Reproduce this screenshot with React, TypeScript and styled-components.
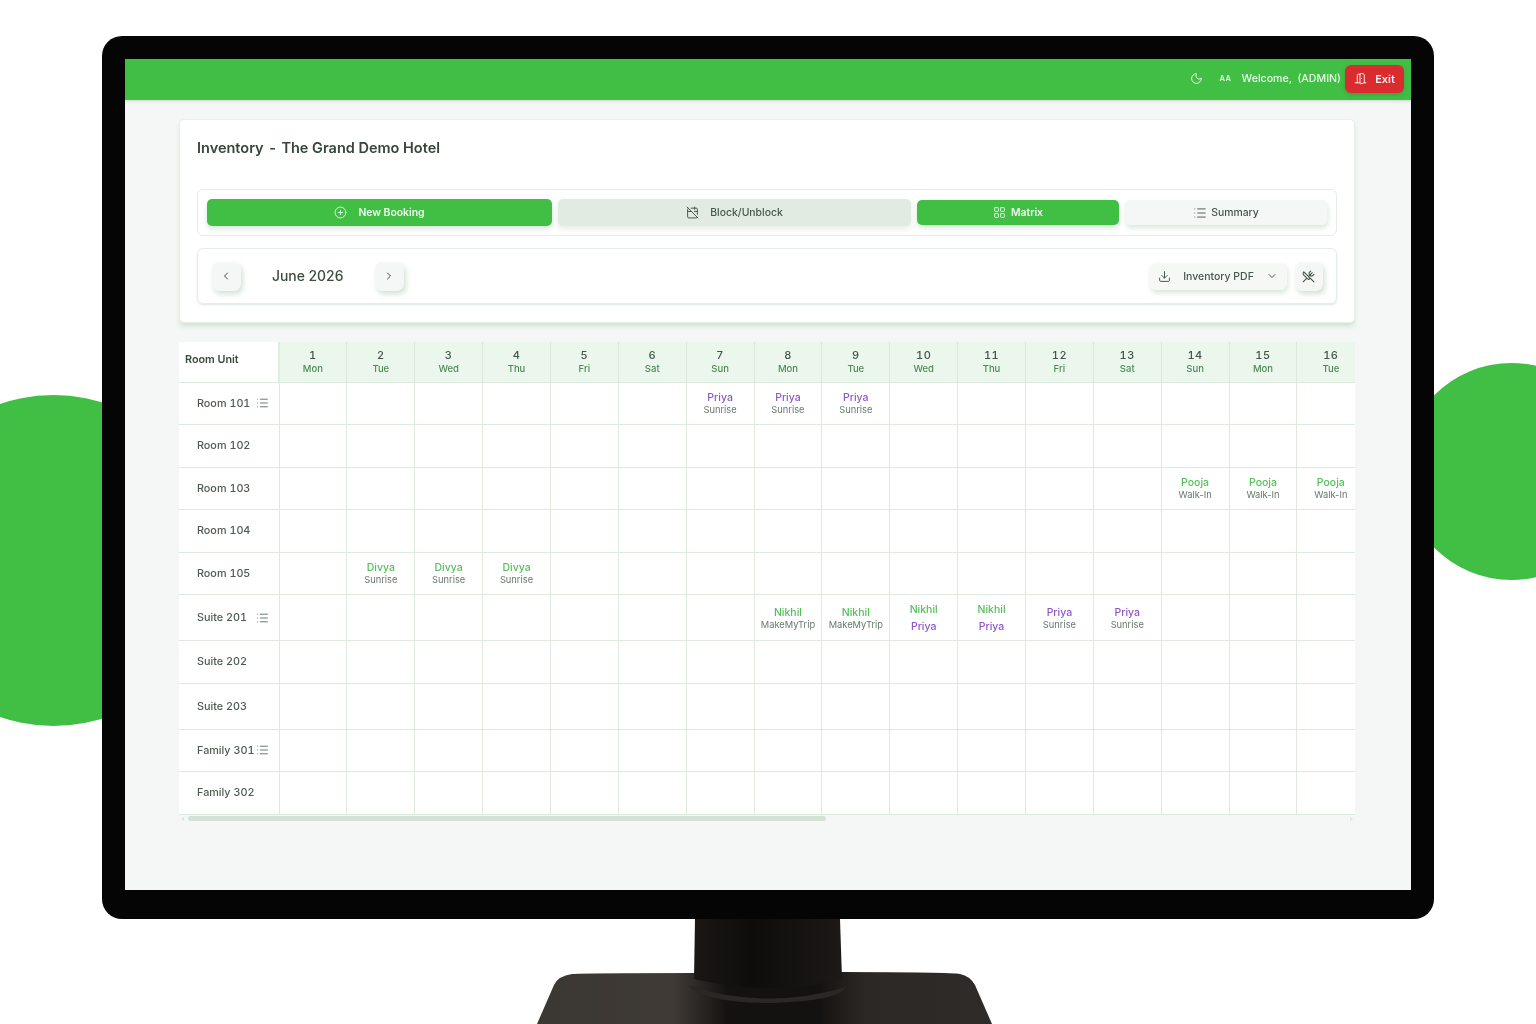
import React from 'react'
import styled, { createGlobalStyle } from 'styled-components'
import {
    CalendarOff,
    ChevronDown,
    ChevronLeft,
    ChevronRight,
    CirclePlus,
    DoorOpen,
    Download,
    LayoutGrid,
    List,
    Moon,
    UtensilsCrossed
} from 'lucide-react'

const GREEN = '#41bf45'
const GUEST_GREEN = '#55c05a'
const PURPLE = '#8c56c9'
const LINE = '#dceadf'

type Booking = { name: string; source?: string; second?: string; color: string }
type Room = { name: string; height: number; list?: boolean; bookings?: Record<number, Booking> }

const days = ['Mon', 'Tue', 'Wed', 'Thu', 'Fri', 'Sat', 'Sun', 'Mon', 'Tue', 'Wed', 'Thu', 'Fri', 'Sat', 'Sun', 'Mon', 'Tue']

const priya: Booking = { name: 'Priya', source: 'Sunrise', color: PURPLE }
const pooja: Booking = { name: 'Pooja', source: 'Walk-In', color: GUEST_GREEN }
const divya: Booking = { name: 'Divya', source: 'Sunrise', color: GUEST_GREEN }
const nikhil: Booking = { name: 'Nikhil', source: 'MakeMyTrip', color: GUEST_GREEN }
const split: Booking = { name: 'Nikhil', second: 'Priya', color: GUEST_GREEN }

const rooms: Room[] = [
    { name: 'Room 101', height: 42.5, list: true, bookings: { 7: priya, 8: priya, 9: priya } },
    { name: 'Room 102', height: 42.5 },
    { name: 'Room 103', height: 42.5, bookings: { 14: pooja, 15: pooja, 16: pooja } },
    { name: 'Room 104', height: 42.5 },
    { name: 'Room 105', height: 42.5, bookings: { 2: divya, 3: divya, 4: divya } },
    {
        name: 'Suite 201',
        height: 46,
        list: true,
        bookings: { 8: nikhil, 9: nikhil, 10: split, 11: split, 12: priya, 13: priya }
    },
    { name: 'Suite 202', height: 42.5 },
    { name: 'Suite 203', height: 46 },
    { name: 'Family 301', height: 42.5, list: true },
    { name: 'Family 302', height: 42.5 }
]

const BookingCell = ({ booking }: { booking: Booking }) => {
    if (booking.second) {
        return (
            <SplitStack>
                <GuestName $color={booking.color}>{booking.name}</GuestName>
                <GuestName $color={PURPLE}>{booking.second}</GuestName>
            </SplitStack>
        )
    }
    return (
        <>
            <GuestName $color={booking.color}>{booking.name}</GuestName>
            <GuestSource>{booking.source}</GuestSource>
        </>
    )
}

const Stand = () => (
    <StandSvg viewBox="0 0 560 105" width="560" height="105">
        <defs>
            <linearGradient id="base" x1="0" x2="1" y1="0" y2="0">
                <stop offset="0" stopColor="#3b3733" />
                <stop offset="0.3" stopColor="#3f3a36" />
                <stop offset="0.42" stopColor="#141210" />
                <stop offset="0.62" stopColor="#141210" />
                <stop offset="0.72" stopColor="#2c2825" />
                <stop offset="1" stopColor="#2f2b28" />
            </linearGradient>
            <linearGradient id="neck" x1="0" x2="1" y1="0" y2="0">
                <stop offset="0" stopColor="#1a1715" />
                <stop offset="0.4" stopColor="#0e0d0c" />
                <stop offset="1" stopColor="#1c1917" />
            </linearGradient>
        </defs>
        <path
            d="M57 105 L74 66 Q78 57 92 55 Q100 54 215 54 L360 53 Q470 53 480 55 Q490 57 495 66 L512 105 Z"
            fill="url(#base)"
        />
        <path d="M215 0 H360 L362 60 Q290 78 214 60 Z" fill="url(#neck)" />
        <path d="M207 66 Q285 92 366 68 Q360 82 290 84 Q225 84 207 66 Z" fill="#2a2724" />
    </StandSvg>
)

export default function App() {
    return (
        <>
            <GlobalStyle />
            <Stage>
                <CircleLeft />
                <CircleRight />
                <Monitor>
                    <Screen>
                        <TopBar>
                            <Moon size={13} strokeWidth={1.8} />
                            <FontToggle>AA</FontToggle>
                            <Welcome>Welcome, &nbsp;(ADMIN)</Welcome>
                            <ExitButton>
                                <DoorOpen size={13} strokeWidth={1.8} />
                                Exit
                            </ExitButton>
                        </TopBar>
                        <Content>
                            <Card>
                                <Title>
                                    Inventory<TitleDash>-</TitleDash>The Grand Demo Hotel
                                </Title>
                                <TabBox>
                                    <TabButton $width={345} $height={27} $variant="primary">
                                        <CirclePlus size={13} strokeWidth={1.6} />
                                        <TabLabel $gap={11}>New Booking</TabLabel>
                                    </TabButton>
                                    <TabButton $width={353} $height={27} $variant="muted">
                                        <CalendarOff size={13} strokeWidth={1.8} />
                                        <TabLabel $gap={11}>Block/Unblock</TabLabel>
                                    </TabButton>
                                    <TabButton $width={202} $height={25} $variant="primary">
                                        <LayoutGrid size={13} strokeWidth={1.6} />
                                        <TabLabel $gap={5}>Matrix</TabLabel>
                                    </TabButton>
                                    <TabButton $width={202} $height={25} $variant="plain">
                                        <List size={14} strokeWidth={1.6} />
                                        <TabLabel $gap={4}>Summary</TabLabel>
                                    </TabButton>
                                </TabBox>
                                <Toolbar>
                                    <MonthNav>
                                        <SquareButton $size={29}>
                                            <ChevronLeft size={12} strokeWidth={2} />
                                        </SquareButton>
                                        <MonthLabel>June 2026</MonthLabel>
                                        <SquareButton $size={29}>
                                            <ChevronRight size={12} strokeWidth={2} />
                                        </SquareButton>
                                    </MonthNav>
                                    <ToolActions>
                                        <PdfButton>
                                            <Download size={13} strokeWidth={1.8} />
                                            <span>Inventory PDF</span>
                                            <ChevronDown size={12} strokeWidth={2} />
                                        </PdfButton>
                                        <SquareButton $size={28}>
                                            <UtensilsCrossed size={13} strokeWidth={1.9} />
                                        </SquareButton>
                                    </ToolActions>
                                </Toolbar>
                            </Card>
                            <Matrix>
                                <MatrixRow $height={39.5}>
                                    <CornerCell>Room Unit</CornerCell>
                                    {days.map((day, i) => (
                                        <DayCell key={i}>
                                            <DayNumber>{i + 1}</DayNumber>
                                            <DayName>{day}</DayName>
                                        </DayCell>
                                    ))}
                                </MatrixRow>
                                {rooms.map((room) => (
                                    <MatrixRow key={room.name} $height={room.height}>
                                        <RoomCell>
                                            {room.name}
                                            {room.list && (
                                                <RoomListIcon>
                                                    <List size={13} strokeWidth={1.5} />
                                                </RoomListIcon>
                                            )}
                                        </RoomCell>
                                        {days.map((_, i) => {
                                            const booking = room.bookings?.[i + 1]
                                            return (
                                                <BodyCell key={i}>
                                                    {booking && <BookingCell booking={booking} />}
                                                </BodyCell>
                                            )
                                        })}
                                    </MatrixRow>
                                ))}
                            </Matrix>
                            <ScrollTrack>
                                <ScrollArrow $side="left" />
                                <ScrollRail>
                                    <ScrollThumb />
                                </ScrollRail>
                                <ScrollArrow $side="right" />
                            </ScrollTrack>
                        </Content>
                    </Screen>
                </Monitor>
                <Stand />
            </Stage>
        </>
    )
}

const GlobalStyle = createGlobalStyle`
    html, body {
        margin: 0;
        background: #fff;
    }
    * {
        box-sizing: border-box;
    }
    body {
        font-family: Inter, "Liberation Sans", sans-serif;
    }
`
const Stage = styled.div`
    position: relative;
    width: 1536px;
    height: 1024px;
    overflow: hidden;
    padding-top: 36px;
    background: #fff;
`
const CircleLeft = styled.div`
    position: absolute;
    left: -112px;
    top: 395px;
    width: 331px;
    height: 331px;
    border-radius: 50%;
    background: ${GREEN};
`
const CircleRight = styled.div`
    position: absolute;
    left: 1403px;
    top: 363px;
    width: 217px;
    height: 217px;
    border-radius: 50%;
    background: ${GREEN};
`
const Monitor = styled.div`
    position: relative;
    width: 1332px;
    height: 883px;
    margin-left: 102px;
    padding: 23px;
    border-radius: 20px;
    background: #050505;
`
const Screen = styled.div`
    width: 1286px;
    height: 831px;
    overflow: hidden;
    background: #f4f7f5;
    filter: blur(0.3px);
`
const TopBar = styled.div`
    height: 41px;
    display: flex;
    align-items: center;
    justify-content: flex-end;
    padding: 0 7px 2px 0;
    background: ${GREEN};
    box-shadow: 0 1px 3px rgba(60, 130, 70, 0.25);
    color: #e9f8ea;
`
const FontToggle = styled.span`
    margin-left: 17px;
    font-size: 7.5px;
    font-weight: 600;
    letter-spacing: 0.5px;
`
const Welcome = styled.span`
    margin-left: 10px;
    font-size: 10.6px;
    font-weight: 500;
`
const ExitButton = styled.div`
    width: 59px;
    height: 28px;
    margin-left: 4px;
    display: flex;
    align-items: center;
    justify-content: center;
    gap: 8px;
    border-radius: 6px;
    background: #da2b2f;
    color: #fdeaea;
    font-size: 11px;
    font-weight: 600;
    box-shadow: 0 2px 4px rgba(40, 100, 50, 0.3);
`
const Content = styled.div`
    padding: 19px 0 0 54px;
`
const Card = styled.div`
    width: 1176px;
    height: 204px;
    padding: 18px 17px;
    border: 1px solid #e8efe9;
    border-radius: 5px;
    background: #fff;
    box-shadow: 0 4px 5px -1px rgba(110, 170, 120, 0.28);
`
const Title = styled.h1`
    display: flex;
    margin: 0 0 31px;
    height: 20px;
    font-size: 14.5px;
    line-height: 20px;
    font-weight: 600;
    color: #36463a;
`
const TitleDash = styled.span`
    margin: 0 5.5px;
`
const TabBox = styled.div`
    height: 47px;
    display: flex;
    align-items: center;
    justify-content: space-between;
    padding: 0 9px;
    border: 1px solid #e6ede7;
    border-radius: 6px;
`
const tabColors = {
    primary: `background: ${GREEN}; color: #eef9ee; font-weight: 600; box-shadow: 0 3px 5px rgba(70, 140, 80, 0.2);`,
    muted: 'background: #e1ebe2; color: #46564a; box-shadow: 0 3px 6px rgba(70, 140, 80, 0.15);',
    plain: 'background: #f4f7f5; color: #46564a; box-shadow: 1px 3px 5px rgba(70, 140, 80, 0.2);'
}
const TabButton = styled.div<{ $width: number; $height: number; $variant: keyof typeof tabColors }>`
    width: ${(p) => p.$width}px;
    height: ${(p) => p.$height}px;
    display: flex;
    align-items: center;
    justify-content: center;
    border-radius: 5px;
    font-size: 10.4px;
    font-weight: 500;
    ${(p) => tabColors[p.$variant]}
`
const TabLabel = styled.span<{ $gap: number }>`
    margin-left: ${(p) => p.$gap}px;
`
const Toolbar = styled.div`
    height: 56px;
    margin-top: 12px;
    display: flex;
    align-items: center;
    justify-content: space-between;
    padding: 0 13px 0 14px;
    border: 1px solid #e6ede7;
    border-radius: 6px;
    box-shadow: 0 1px 2px rgba(90, 130, 100, 0.2);
`
const MonthNav = styled.div`
    display: flex;
    align-items: center;
`
const MonthLabel = styled.span`
    width: 134px;
    padding: 0 0 1px 31px;
    font-size: 13.9px;
    font-weight: 500;
    color: #3d4b40;
`
const SquareButton = styled.div<{ $size: number }>`
    width: ${(p) => p.$size}px;
    height: 29px;
    display: flex;
    align-items: center;
    justify-content: center;
    padding-right: 2px;
    border-radius: 7px;
    background: #f4f7f5;
    color: #3d4b40;
    box-shadow: 2px 3px 5px rgba(80, 140, 90, 0.25);
`
const ToolActions = styled.div`
    display: flex;
    align-items: center;
    gap: 8px;
`
const PdfButton = styled.div`
    width: 137px;
    height: 27px;
    display: flex;
    align-items: center;
    justify-content: space-between;
    padding: 0 9px 0 8px;
    border-radius: 6px;
    background: #f6f8f6;
    color: #46564a;
    font-size: 10.5px;
    font-weight: 500;
    box-shadow: 1px 3px 5px rgba(80, 140, 90, 0.22);
`
const Matrix = styled.div`
    width: 1176px;
    margin-top: 19px;
    overflow: hidden;
    background: #fff;
    border-bottom: 1px solid ${LINE};
`
const MatrixRow = styled.div<{ $height: number }>`
    display: grid;
    grid-template-columns: 100.5px repeat(16, 67.87px);
    width: 1187px;
    height: ${(p) => p.$height}px;
`
const CornerCell = styled.div`
    display: flex;
    align-items: center;
    padding: 0 0 5px 6px;
    border-right: 2px solid #e0ebe2;
    background: #fff;
    color: #3d4b40;
    font-size: 10.8px;
    font-weight: 600;
`
const DayCell = styled.div`
    display: flex;
    flex-direction: column;
    align-items: center;
    justify-content: center;
    border-right: 1px solid #dbe8dd;
    background: #ebf6ed;
`
const DayNumber = styled.span`
    font-size: 11px;
    line-height: 14px;
    font-weight: 500;
    letter-spacing: 0.5px;
    font-variant-numeric: tabular-nums;
    color: #45544a;
`
const DayName = styled.span`
    font-size: 9.5px;
    line-height: 14px;
    font-weight: 500;
    color: #4e8a56;
`
const RoomCell = styled.div`
    position: relative;
    display: flex;
    align-items: center;
    padding-left: 18px;
    border-top: 1px solid ${LINE};
    border-right: 1px solid ${LINE};
    color: #4e5b51;
    font-size: 10.8px;
    font-weight: 500;
    font-variant-numeric: tabular-nums;
`
const RoomListIcon = styled.span`
    position: absolute;
    left: 77px;
    top: 50%;
    transform: translateY(-50%);
    display: flex;
`
const BodyCell = styled.div`
    display: flex;
    flex-direction: column;
    align-items: center;
    justify-content: center;
    padding-top: 2px;
    border-top: 1px solid ${LINE};
    border-right: 1px solid ${LINE};
`
const GuestName = styled.span<{ $color: string }>`
    font-size: 10.5px;
    line-height: 12px;
    font-weight: 500;
    color: ${(p) => p.$color};
`
const GuestSource = styled.span`
    font-size: 9.3px;
    line-height: 12px;
    color: #66796b;
`
const SplitStack = styled.div`
    display: flex;
    flex-direction: column;
    align-items: center;
    gap: 5px;
`
const ScrollTrack = styled.div`
    width: 1176px;
    height: 6px;
    margin-top: 1px;
    display: flex;
    align-items: center;
    justify-content: space-between;
    padding: 0 2px;
`
const ScrollArrow = styled.span<{ $side: 'left' | 'right' }>`
    width: 0;
    height: 0;
    border-top: 2px solid transparent;
    border-bottom: 2px solid transparent;
    ${(p) => (p.$side === 'left' ? 'border-right' : 'border-left')}: 3px solid #d8e4da;
`
const ScrollRail = styled.div`
    flex: 1;
    padding-left: 4px;
`
const ScrollThumb = styled.div`
    width: 638px;
    height: 5px;
    border-radius: 3px;
    background: #d3e2d6;
`
const StandSvg = styled.svg`
    display: block;
    margin-left: 480px;
`
